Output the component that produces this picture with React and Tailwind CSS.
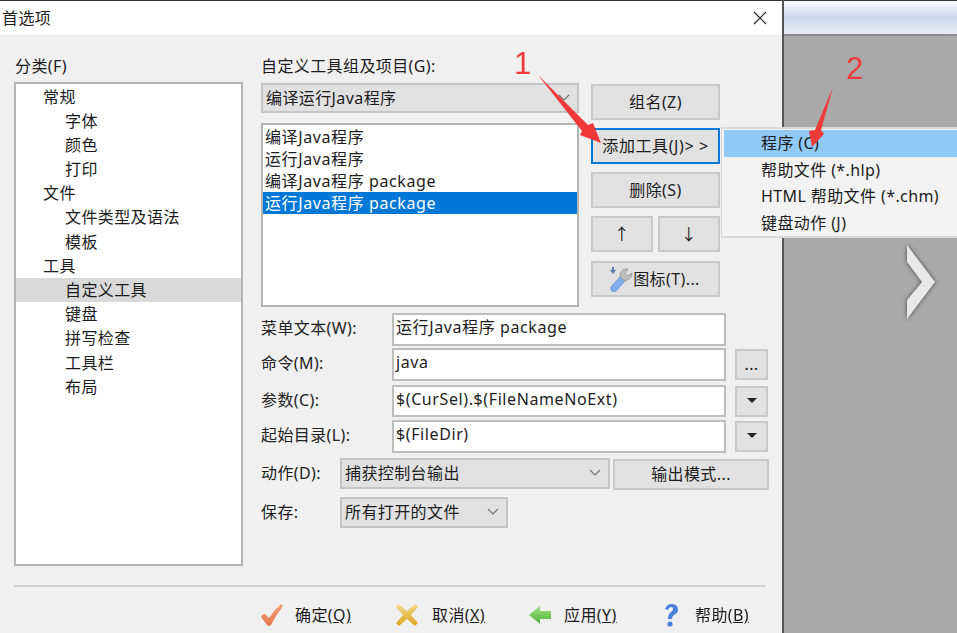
const font = { fontFamily: '"Noto Sans", "Noto Sans CJK SC", sans-serif' };

const treeItems = [
  { label: "常规" },
  { label: "字体", sub: true },
  { label: "颜色", sub: true },
  { label: "打印", sub: true },
  { label: "文件" },
  { label: "文件类型及语法", sub: true },
  { label: "模板", sub: true },
  { label: "工具" },
  { label: "自定义工具", sub: true, active: true },
  { label: "键盘", sub: true },
  { label: "拼写检查", sub: true },
  { label: "工具栏", sub: true },
  { label: "布局", sub: true },
];

const toolItems = ["编译Java程序", "运行Java程序", "编译Java程序 package", "运行Java程序 package"];
const menuItems = ["程序 (C)", "帮助文件 (*.hlp)", "HTML 帮助文件 (*.chm)", "键盘动作 (J)"];

const Chevron = () => (
  <svg width="14" height="8" viewBox="0 0 14 8" className="shrink-0">
    <polyline points="2,1 7,6 12,1" fill="none" stroke="#6f6f6f" strokeWidth="1.1" />
  </svg>
);

const Combo = ({ className, children }) => (
  <div className={`flex items-center justify-between bg-[#e1e1e1] border-2 border-[#c4c4c4] pl-[3px] pr-[6px] ${className}`}>
    <span>{children}</span>
    <Chevron />
  </div>
);

const Button = ({ className, children }) => (
  <div className={`flex items-center justify-center bg-[#e1e1e1] border-2 border-[#c8c8c8] ${className}`}>
    {children}
  </div>
);

const Field = ({ className, label, value, side }) => (
  <div className={`flex ${className}`}>
    <div className="w-[131px] pt-[3px] text-[#222]">{label}</div>
    <div className="w-[334px] bg-white border-2 border-[#bdbdbd] pl-[2px] leading-[25px] tracking-[0.6px]">{value}</div>
    {side && <div className="ml-[9px] mt-[1px]">{side}</div>}
  </div>
);

const DropTriangle = () => (
  <svg width="10" height="6" viewBox="0 0 10 6">
    <polygon points="0,0 10,0 5,5" fill="#222" />
  </svg>
);

const WrenchIcon = () => (
  <svg width="24" height="26" viewBox="0 0 24 26" className="shrink-0 -ml-[2px]">
    <path d="M2 21 L11 11 L16 15 L7 25 Q1 27 2 21 Z" fill="#7fb0ec" stroke="#5a8ad0" strokeWidth="0.8" />
    <path d="M11 11 Q11 4 16 3 L19 3 L16 7 L18 10 L23 7 Q23 13 16 15 Z" fill="#bdbdbd" stroke="#939393" strokeWidth="0.8" />
    <path d="M3 1 L5 1 L5 4 L7 4 L4 8 L1 4 L3 4 Z" fill="#5f7aa8" />
  </svg>
);

const CheckIcon = () => (
  <svg width="24" height="24" viewBox="0 0 24 24">
    <defs>
      <linearGradient id="checkFill" x1="0" y1="0" x2="0" y2="1">
        <stop offset="0" stopColor="#f2a27e" />
        <stop offset="1" stopColor="#e57a4e" />
      </linearGradient>
    </defs>
    <path d="M1 14 Q2 11 5 11 L9 15 Q14 7 21 1 L23 3 Q16 12 11 22 Q9 24 7 22 Z" fill="url(#checkFill)" />
  </svg>
);

const CrossIcon = () => (
  <svg width="24" height="24" viewBox="0 0 24 24">
    <defs>
      <linearGradient id="crossFill" x1="0" y1="0" x2="0" y2="1">
        <stop offset="0" stopColor="#efd98a" />
        <stop offset="1" stopColor="#e3a51f" />
      </linearGradient>
    </defs>
    <path d="M3 1 L12 8 L20 1 L23 4 L16 12 L23 20 L20 23 L12 16 L4 23 L1 20 L8 12 L1 4 Z" fill="url(#crossFill)" />
  </svg>
);

const BackIcon = () => (
  <svg width="24" height="24" viewBox="0 0 24 24">
    <defs>
      <linearGradient id="backFill" x1="0" y1="0" x2="0" y2="1">
        <stop offset="0" stopColor="#9fe07e" />
        <stop offset="1" stopColor="#4fb53e" />
      </linearGradient>
    </defs>
    <path d="M1 12 L12 3 L12 8 L23 8 L23 16 L12 16 L12 21 Z" fill="url(#backFill)" />
  </svg>
);

const HelpIcon = () => (
  <svg width="24" height="24" viewBox="4 0 24 24">
    <path d="M6 6 Q8 1 13 1 Q19 1 19 7 Q19 10 15 12 Q13 13 13 16 L9 16 Q9 11 12 9 Q14 8 14 6 Q14 4 12 4 Q10 4 9 7 Z" fill="#4a80dc" />
    <circle cx="11" cy="21" r="2.6" fill="#4a80dc" />
  </svg>
);

const footerButtons = [
  { icon: <CheckIcon />, label: "确定", key: "(Q)", width: "w-[135px]", iconBox: "w-[35px]" },
  { icon: <CrossIcon />, label: "取消", key: "(X)", width: "w-[133px]", iconBox: "w-[37px]" },
  { icon: <BackIcon />, label: "应用", key: "(Y)", width: "w-[135px]", iconBox: "w-[36px]" },
  { icon: <HelpIcon />, label: "帮助", key: "(B)", width: "w-[100px]", iconBox: "w-[32px]" },
];

export default function App() {
  return (
    <div
      className="relative flex w-[957px] h-[633px] overflow-hidden text-[16px] tracking-[0.4px] text-[#1c1c1c] blur-[0.35px]"
      style={font}
    >
      {/* dialog */}
      <div className="flex flex-col w-[782px] h-full bg-[#f0f0f0]">
        <div className="flex items-center justify-between h-[35px] bg-white border-t border-[#333] pl-[2px] pr-[15px]">
          <span>首选项</span>
          <svg width="14" height="14" viewBox="0 0 14 14">
            <path d="M1 1 L13 13 M13 1 L1 13" stroke="#222" strokeWidth="1.1" />
          </svg>
        </div>

        <div className="flex h-[531px] pt-[21px] pl-[14px]">
          <div className="w-[229px]">
            <div className="h-[20px] mb-[6px] leading-[20px] pl-[1px]">分类(F)</div>
            <div className="h-[484px] bg-white border-2 border-[#b4b4b4] pt-[1px]">
              {treeItems.map((item) => (
                <div
                  key={item.label}
                  className={`h-[24.2px] leading-[24px] ${item.sub ? "pl-[49px]" : "pl-[27px]"} ${item.active ? "bg-[#d9d9d9]" : ""}`}
                >
                  {item.label}
                </div>
              ))}
            </div>
          </div>

          <div className="ml-[18px] w-[508px]">
            <div className="h-[20px] mb-[7px] leading-[20px]">自定义工具组及项目(G):</div>
            <div className="flex">
              <div className="w-[318px]">
                <Combo className="h-[30px]">编译运行Java程序</Combo>
                <div className="mt-[10px] h-[184px] bg-white border-2 border-[#b4b4b4] pt-[1px]">
                  {toolItems.map((item, i) => (
                    <div
                      key={item}
                      className={`h-[22px] leading-[22px] pl-[2px] tracking-[0.6px] ${i === 3 ? "bg-[#0078d7] text-white" : ""}`}
                    >
                      {item}
                    </div>
                  ))}
                </div>
              </div>
              <div className="ml-[12px] w-[129px] pt-[1px] flex flex-col">
                <Button className="h-[36px]">组名(Z)</Button>
                <Button className="h-[36px] mt-[8px] !border-[#0078d7] whitespace-nowrap tracking-[0.6px]">添加工具(J)&gt; &gt;</Button>
                <Button className="h-[36px] mt-[8px]">删除(S)</Button>
                <div className="flex mt-[8px] gap-[5px]">
                  <Button className="w-[62px] h-[36px]">↑</Button>
                  <Button className="w-[62px] h-[36px]">↓</Button>
                </div>
                <Button className="h-[36px] mt-[9px]">
                  <WrenchIcon />
                  <span>图标(T)...</span>
                </Button>
              </div>
            </div>

            <Field className="h-[33px] mt-[6px]" label="菜单文本(W):" value="运行Java程序 package" />
            <Field
              className="h-[33px] mt-[2px]"
              label="命令(M):"
              value="java"
              side={<Button className="w-[33px] h-[31px] items-end pb-[2px]">...</Button>}
            />
            <Field
              className="h-[32px] mt-[4px]"
              label="参数(C):"
              value="$(CurSel).$(FileNameNoExt)"
              side={<Button className="w-[33px] h-[31px]"><DropTriangle /></Button>}
            />
            <Field
              className="h-[33px] mt-[3px]"
              label="起始目录(L):"
              value="$(FileDir)"
              side={<Button className="w-[33px] h-[31px]"><DropTriangle /></Button>}
            />
            <div className="flex mt-[5px] h-[32px]">
              <div className="w-[79px] pt-[3px]">动作(D):</div>
              <Combo className="w-[270px] h-[31px]">捕获控制台输出</Combo>
              <Button className="w-[156px] h-[31px] ml-[3px] mt-[1px]">输出模式...</Button>
            </div>
            <div className="flex mt-[7px]">
              <div className="w-[79px] pt-[3px]">保存:</div>
              <Combo className="w-[168px] h-[31px]">所有打开的文件</Combo>
            </div>
          </div>
        </div>

        <div className="ml-[14px] mt-[19px] w-[752px] h-[2px] bg-[#d0d0d0]" />

        <div className="flex items-center h-[47px] pt-[10px] pl-[260px]">
          {footerButtons.map((btn) => (
            <div key={btn.label} className={`flex items-center ${btn.width}`}>
              <span className={btn.iconBox}>{btn.icon}</span>
              <span>
                {btn.label}
                <span className="underline">{btn.key}</span>
              </span>
            </div>
          ))}
        </div>
      </div>

      {/* window behind the dialog */}
      <div className="flex flex-col flex-1 border-l-2 border-[#555]">
        <div className="h-[36px] bg-gradient-to-b from-[#f8f9fd] via-[#ccd6ec] to-[#e9edf5] border-t border-[#333] border-b-2 border-b-[#8a8a8a]" />
        <div className="flex-1 bg-[#a9a9a9]" />
      </div>

      <svg width="34" height="80" viewBox="0 0 34 80" className="absolute left-[904px] top-[242px] drop-shadow-[0_0_2px_rgba(40,40,40,0.8)]">
        <polygon points="3,3 31,40 3,77 3,58 18,40 3,20" fill="#e8e8e8" />
      </svg>

      {/* popup menu */}
      <div className="absolute left-[721px] top-[127px] w-[236px] h-[111px] bg-[#f2f2f2] border-t-2 border-l border-b-2 border-[#d8d8d8] pt-[1px] pl-[2px]">
        {menuItems.map((item, i) => (
          <div
            key={item}
            className={`h-[26.5px] leading-[26px] pl-[37px] whitespace-nowrap ${i === 0 ? "bg-[#90c8f6]" : ""}`}
          >
            {item}
          </div>
        ))}
      </div>

      {/* red annotations */}
      <svg width="957" height="633" viewBox="0 0 957 633" className="absolute left-0 top-0 pointer-events-none">
        <polygon points="538,75 588,125 593,123 601,143 580,135 582,131" fill="#f03a3a" />
        <polygon points="833,87 821,130 824,134 812,147 809,131 815,130" fill="#f03a3a" />
      </svg>
      <span className="absolute left-[514px] top-[46px] text-[31px] leading-[36px] text-[#f03a3a]" style={{ fontFamily: '"Liberation Sans", sans-serif' }}>1</span>
      <span className="absolute left-[846px] top-[51px] text-[31px] leading-[36px] text-[#f03a3a]" style={{ fontFamily: '"Liberation Sans", sans-serif' }}>2</span>
    </div>
  );
}
